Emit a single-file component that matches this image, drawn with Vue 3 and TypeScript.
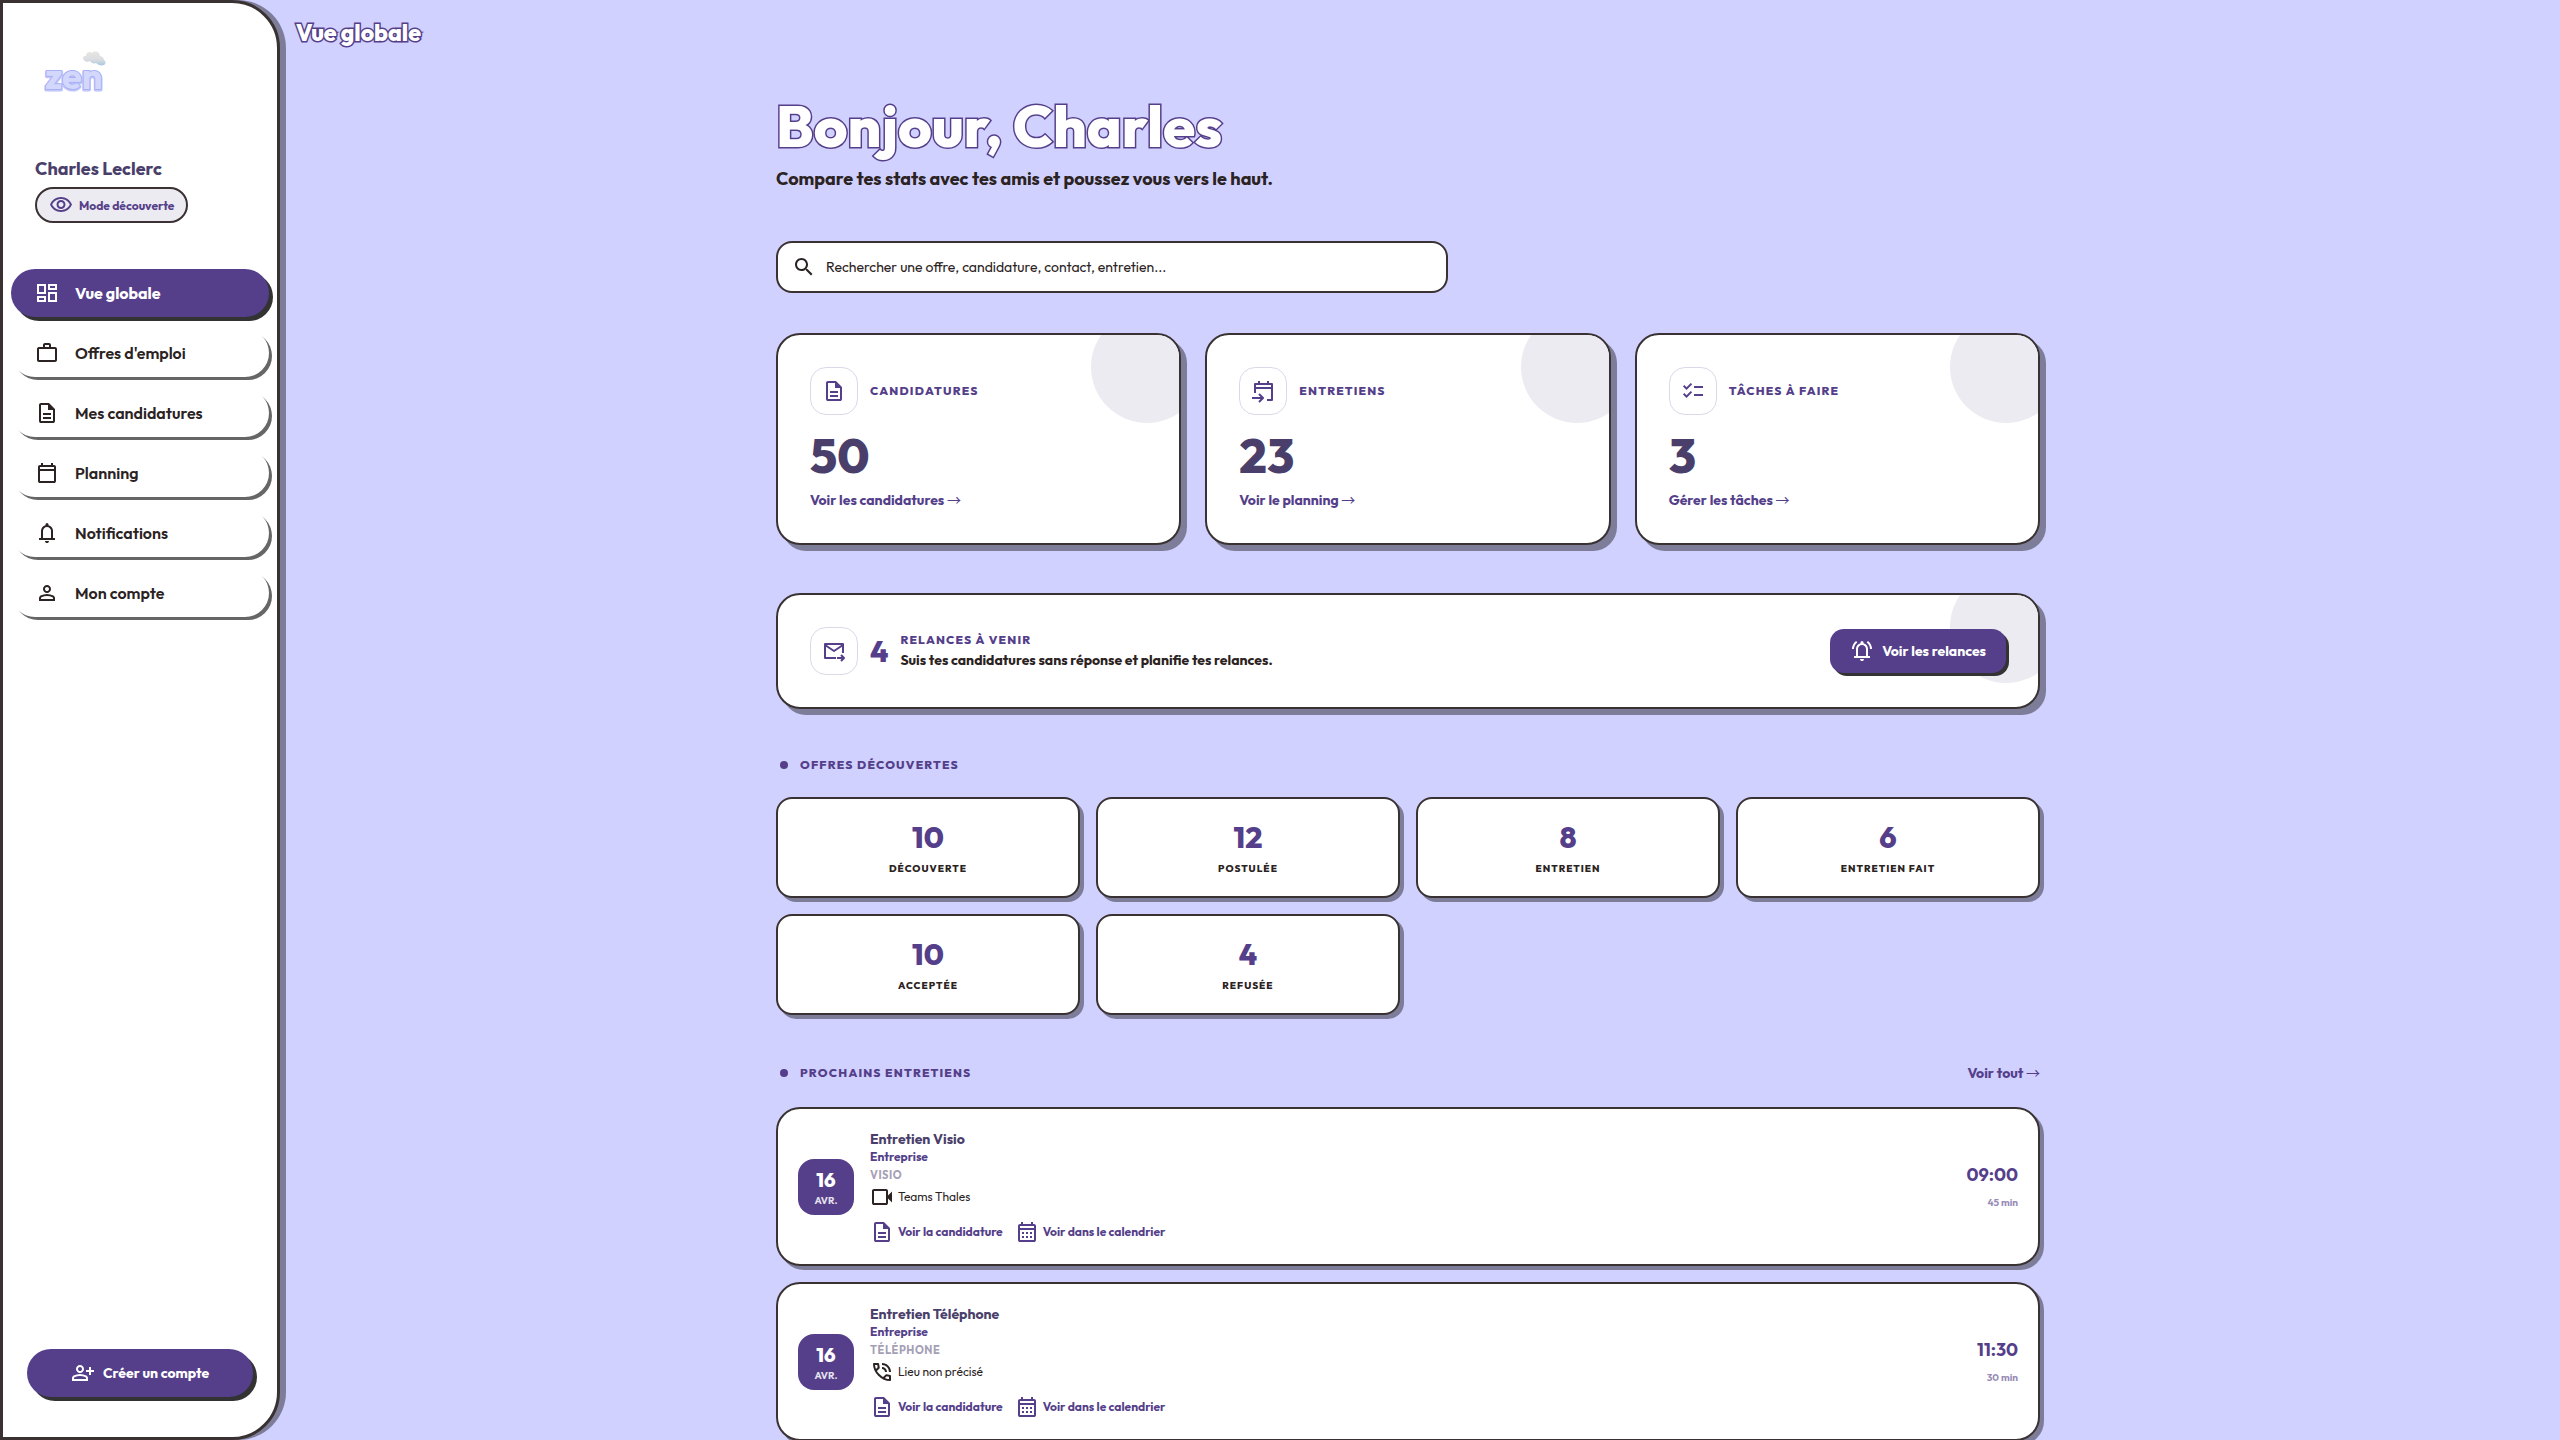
<script setup lang="ts">
import { defineComponent, h } from 'vue'

const person =
  'M12 12q-1.65 0-2.825-1.175T8 8q0-1.65 1.175-2.825T12 4q1.65 0 2.825 1.175T16 8q0 1.65-1.175 2.825T12 12Zm-8 8v-2.8q0-.85.438-1.562T5.6 14.55q1.55-.775 3.15-1.163T12 13q1.65 0 3.25.388t3.15 1.162q.725.375 1.163 1.088T20 17.2V20H4Zm2-2h12v-.8q0-.275-.137-.5t-.363-.35q-1.35-.675-2.725-1.012T12 15q-1.4 0-2.775.338T6.5 16.35q-.225.125-.362.35T6 17.2v.8Zm6-8q.825 0 1.413-.587T14 8q0-.825-.587-1.413T12 6q-.825 0-1.413.588T10 8q0 .825.588 1.413T12 10Z'
const bell =
  'M4 19v-2h2v-7q0-2.075 1.25-3.687T10.5 4.2v-.7q0-.625.438-1.062T12 2q.625 0 1.063.438T13.5 3.5v.7q2 .5 3.25 2.113T18 10v7h2v2H4Zm8 3q-.825 0-1.413-.587T10 20h4q0 .825-.587 1.413T12 22Zm-4-5h8v-7q0-1.65-1.175-2.825T12 6q-1.65 0-2.825 1.175T8 10v7Z'
const calendar =
  'M5 22q-.825 0-1.413-.587T3 20V6q0-.825.588-1.413T5 4h1V2h2v2h8V2h2v2h1q.825 0 1.413.588T21 6v14q0 .825-.587 1.413T19 22H5Zm0-2h14V10H5v10ZM5 8h14V6H5v2Z'

const shapes: Record<string, string> = {
  eye: 'M12 6c3.79 0 7.17 2.13 8.82 5.5C19.17 14.87 15.79 17 12 17s-7.17-2.13-8.82-5.5C4.83 8.13 8.21 6 12 6m0-2C7 4 2.73 7.11 1 11.5 2.73 15.89 7 19 12 19s9.27-3.11 11-7.5C21.27 7.11 17 4 12 4zm0 5c1.38 0 2.5 1.12 2.5 2.5S13.38 14 12 14s-2.5-1.12-2.5-2.5S10.62 9 12 9m0-2c-2.48 0-4.5 2.02-4.5 4.5S9.52 16 12 16s4.5-2.02 4.5-4.5S14.48 7 12 7z',
  dashboard:
    'M2 3h9v10H2Zm2 2v6h5V5Zm9-2h9v6h-9Zm2 2v2h5V5Zm-2 6h9v10h-9Zm2 2v6h5v-6ZM2 15h9v6H2Zm2 2v2h5v-2Z',
  work: 'M14 6V4h-4v2h4zM4 8v11h16V8H4zm16-2c1.11 0 2 .89 2 2v11c0 1.11-.89 2-2 2H4c-1.11 0-2-.89-2-2l.01-11c0-1.11.88-2 1.99-2h4V4c0-1.11.89-2 2-2h4c1.11 0 2 .89 2 2v2h4z',
  doc: 'M8 18h8v-2H8v2Zm0-4h8v-2H8v2Zm-2 8q-.825 0-1.413-.587T4 20V4q0-.825.588-1.413T6 2h8l6 6v12q0 .825-.588 1.413T18 22H6Zm7-13V4H6v16h12V9h-5Z',
  calendar,
  month: calendar + 'M7 12h2v2H7Zm4 0h2v2h-2Zm4 0h2v2h-2ZM7 16h2v2H7Zm4 0h2v2h-2Zm4 0h2v2h-2Z',
  bell,
  ringing:
    bell +
    'M2 10q0-2.5 1.113-4.587T6.1 1.95L7.3 3.55Q5.8 4.65 4.9 6.325T4 10H2Zm18 0q0-2-.9-3.675T16.7 3.55l1.2-1.6Q19.775 3.325 20.888 5.413T22 10h-2Z',
  person,
  search:
    'M15.5 14h-.79l-.28-.27C15.41 12.59 16 11.11 16 9.5 16 5.91 13.09 3 9.5 3S3 5.91 3 9.5 5.91 16 9.5 16c1.61 0 3.09-.59 4.23-1.57l.27.28v.79l5 4.99L20.49 19l-4.99-5zm-6 0C7.01 14 5 11.99 5 9.5S7.01 5 9.5 5 14 7.01 14 9.5 11.99 14 9.5 14z',
  checklist:
    'M5.55 19 2 15.45l1.4-1.4 2.125 2.125 4.25-4.25 1.4 1.425L5.55 19Zm0-8L2 7.45l1.4-1.4 2.125 2.125 4.25-4.25 1.4 1.425L5.55 11ZM13 17v-2h9v2h-9Zm0-8V7h9v2h-9Z',
  video:
    'M4 20q-.825 0-1.413-.587T2 18V6q0-.825.588-1.413T4 4h12q.825 0 1.413.588T18 6v4.5l4-4v11l-4-4V18q0 .825-.587 1.413T16 20H4Zm0-2h12V6H4v12Z',
  phone:
    'M19.95 21q-3.125 0-6.175-1.362t-5.55-3.863q-2.5-2.5-3.862-5.55T3 4.05q0-.45.3-.75t.75-.3H8.1q.35 0 .625.238t.325.562l.65 3.5q.05.4-.025.675T9.4 8.45L6.975 10.9q.5.925 1.187 1.787t1.513 1.663q.775.775 1.625 1.438T13.1 17l2.35-2.35q.225-.225.588-.337t.712-.063l3.45.7q.35.1.575.363T21 15.9v4.05q0 .45-.3.75t-.75.3ZM6.025 9l1.65-1.65L7.25 5H5.025q.125 1.025.35 2.025T6.025 9Zm8.95 8.95q.975.425 1.988.675T19 18.95v-2.2l-2.35-.475-1.675 1.675ZM19 12q0-2.925-2.037-4.962T12 5V3q1.875 0 3.513.713t2.85 1.925q1.212 1.212 1.925 2.85T21 12h-2Zm-4 0q0-1.25-.875-2.125T12 9V7q2.075 0 3.538 1.463T17 12h-2Z',
}

const strokes: Record<string, string> = {
  eventIn: 'M4 14V5h17v16h-5M4 9h17M8 2v3M17 2v3M1 19h11M8 15l4 4-4 4',
  mailForward: 'M14 19H3V5h18v9M3 6l9 6 9-6M15 19h7M19 16l3 3-3 3',
}

const Icon = defineComponent({
  props: { name: { type: String, required: true } },
  setup(props) {
    return () => {
      const attrs = { viewBox: '0 0 24 24', width: 24, height: 24, 'aria-hidden': 'true', style: 'flex:none;display:block' }
      if (props.name === 'personAdd') {
        return h('svg', { ...attrs, fill: 'currentColor' }, [
          h('path', { d: person, transform: 'translate(-3 0)' }),
          h('path', { d: 'M18 14v-3h-3V9h3V6h2v3h3v2h-3v3h-2Z' }),
        ])
      }
      const line = strokes[props.name]
      return line
        ? h('svg', { ...attrs, fill: 'none', stroke: 'currentColor', 'stroke-width': 2, 'stroke-linejoin': 'round' }, [h('path', { d: line })])
        : h('svg', { ...attrs, fill: 'currentColor' }, [h('path', { d: shapes[props.name], 'fill-rule': 'evenodd' })])
    }
  },
})

const nav = [
  { icon: 'dashboard', label: 'Vue globale', active: true },
  { icon: 'work', label: "Offres d'emploi" },
  { icon: 'doc', label: 'Mes candidatures' },
  { icon: 'calendar', label: 'Planning' },
  { icon: 'bell', label: 'Notifications' },
  { icon: 'person', label: 'Mon compte' },
]

const stats = [
  { icon: 'doc', label: 'Candidatures', value: 50, link: 'Voir les candidatures' },
  { icon: 'eventIn', label: 'Entretiens', value: 23, link: 'Voir le planning' },
  { icon: 'checklist', label: 'Tâches à faire', value: 3, link: 'Gérer les tâches' },
]

const offers = [
  { value: 10, label: 'Découverte' },
  { value: 12, label: 'Postulée' },
  { value: 8, label: 'Entretien' },
  { value: 6, label: 'Entretien fait' },
  { value: 10, label: 'Acceptée' },
  { value: 4, label: 'Refusée' },
]

const interviews = [
  { title: 'Entretien Visio', type: 'Visio', icon: 'video', place: 'Teams Thales', time: '09:00', length: '45 min' },
  { title: 'Entretien Téléphone', type: 'Téléphone', icon: 'phone', place: 'Lieu non précisé', time: '11:30', length: '30 min' },
]
</script>

<template>
  <div class="app">
    <aside class="sidebar">
      <svg class="logo" viewBox="0 0 80 80" role="img" aria-label="zen">
        <defs>
          <linearGradient id="cloud" x1="0" y1="0" x2="0" y2="1">
            <stop offset="0" stop-color="#e9e6e2" />
            <stop offset="0.6" stop-color="#d9dcdf" />
            <stop offset="1" stop-color="#a9c8e0" />
          </linearGradient>
        </defs>
        <text x="10" y="54" class="logo-shadow">zen</text>
        <text x="10" y="53" class="logo-text">zen</text>
        <path
          fill="url(#cloud)"
          d="M49 24c-2-2-1-4 2-4 0-4 4-5 6-3 3-3 8-1 8 3 3 0 4 3 4 4 2 1 2 4 0 5-3 1-6 0-8-2-2 1-5 0-6-2-2 1-5 1-6-1Z"
        />
      </svg>

      <div class="profile">
        <p class="name">Charles Leclerc</p>
        <button type="button" class="mode"><Icon name="eye" />Mode découverte</button>
      </div>

      <nav class="nav">
        <a v-for="item in nav" :key="item.label" href="#" :class="['nav-item', { active: item.active }]">
          <Icon :name="item.icon" />{{ item.label }}
        </a>
      </nav>

      <button type="button" class="create"><Icon name="personAdd" />Créer un compte</button>
    </aside>

    <div class="content">
      <header class="topbar">Vue globale</header>

      <main class="page">
        <h1>Bonjour, Charles</h1>
        <p class="subtitle">Compare tes stats avec tes amis et poussez vous vers le haut.</p>

        <label class="search">
          <Icon name="search" />
          <input type="search" aria-label="Rechercher" placeholder="Rechercher une offre, candidature, contact, entretien..." />
        </label>

        <section class="stats">
          <article v-for="s in stats" :key="s.label" class="card stat">
            <div class="stat-head">
              <span class="icon-box"><Icon :name="s.icon" /></span>
              <h2 class="label">{{ s.label }}</h2>
            </div>
            <p class="stat-value">{{ s.value }}</p>
            <a href="#" class="link">{{ s.link }} <span class="arrow">→</span></a>
          </article>
        </section>

        <section class="card relances">
          <span class="icon-box"><Icon name="mailForward" /></span>
          <strong class="count">4</strong>
          <div class="relances-text">
            <h2 class="label">Relances à venir</h2>
            <p>Suis tes candidatures sans réponse et planifie tes relances.</p>
          </div>
          <button type="button" class="relances-btn"><Icon name="ringing" />Voir les relances</button>
        </section>

        <section class="section">
          <div class="section-head"><h2 class="label dotted">Offres découvertes</h2></div>
          <div class="offers">
            <div v-for="o in offers" :key="o.label" class="offer">
              <strong>{{ o.value }}</strong>
              <span>{{ o.label }}</span>
            </div>
          </div>
        </section>

        <section class="section">
          <div class="section-head">
            <h2 class="label dotted">Prochains entretiens</h2>
            <a href="#" class="link">Voir tout <span class="arrow">→</span></a>
          </div>
          <div class="interviews">
            <article v-for="i in interviews" :key="i.title" class="interview">
              <div class="date"><strong>16</strong><span>avr.</span></div>
              <div class="details">
                <h3>{{ i.title }}</h3>
                <p class="company">Entreprise</p>
                <p class="type">{{ i.type }}</p>
                <p class="place"><Icon :name="i.icon" />{{ i.place }}</p>
                <div class="actions">
                  <a href="#"><Icon name="doc" />Voir la candidature</a>
                  <a href="#"><Icon name="month" />Voir dans le calendrier</a>
                </div>
              </div>
              <div class="when">
                <strong>{{ i.time }}</strong>
                <span>{{ i.length }}</span>
              </div>
            </article>
          </div>
        </section>
      </main>
    </div>
  </div>
</template>

<style>
body {
  background: #d0d1ff;
}
</style>

<style scoped>
* {
  box-sizing: border-box;
}
h1, h2, h3, p {
  margin: 0;
}
a {
  color: inherit;
  text-decoration: none;
}
button, input {
  font: inherit;
  color: inherit;
  border: 0;
  padding: 0;
  cursor: pointer;
}
.app {
  display: flex;
  height: 100vh;
  overflow: hidden;
  background: #d0d1ff;
  color: #2b2222;
  font-family: Outfit, Lato, 'Open Sans', sans-serif;
}

/* Sidebar */
.sidebar {
  flex: none;
  display: flex;
  flex-direction: column;
  width: 280px;
  border: 3px solid #3a3232;
  border-radius: 0 48px 48px 0;
  background: #fff;
  box-shadow: 6px 0 0 rgba(0, 0, 0, 0.4);
}
.logo {
  width: 80px;
  height: 80px;
  margin: 33px 0 0 32px;
}
.logo text {
  font-family: Outfit, Lato, sans-serif;
  font-size: 36px;
  font-weight: 700;
  stroke-linejoin: round;
}
.logo-shadow {
  fill: #b6bdf8;
  stroke: #c3c8fa;
  stroke-width: 3px;
}
.logo-text {
  fill: #d3d7fb;
  stroke: #a9b1f5;
  stroke-width: 2px;
  paint-order: stroke fill;
}
.profile {
  margin: 41px 0 0 32px;
}
.name {
  font-size: 18px;
  line-height: 24px;
  font-weight: 700;
  color: #4a3f6b;
}
.mode {
  display: flex;
  align-items: center;
  gap: 6px;
  height: 36px;
  margin-top: 6px;
  padding: 0 12px;
  border: 2px solid #3a3232;
  border-radius: 18px;
  background: #edebf2;
  color: #553f8a;
  font-size: 12px;
  font-weight: 700;
}
.nav {
  display: flex;
  flex-direction: column;
  gap: 12px;
  margin: 46px 8px 0;
}
.nav-item {
  display: flex;
  align-items: center;
  gap: 16px;
  height: 48px;
  padding: 0 24px;
  border-radius: 24px;
  background: #fff;
  box-shadow: 3px 3px 0 #666;
  font-size: 16px;
  font-weight: 600;
}
.nav-item.active {
  background: #553f8a;
  color: #fff;
  box-shadow: 4px 4px 0 #333;
  font-weight: 700;
}
.create {
  display: flex;
  align-items: center;
  justify-content: center;
  gap: 8px;
  height: 48px;
  margin: auto 24px 40px;
  border-radius: 24px;
  background: #553f8a;
  color: #fff;
  box-shadow: 4px 4px 0 #333;
  font-size: 14px;
  font-weight: 700;
}

/* Main column */
.content {
  flex: 1;
  min-width: 0;
  overflow-y: auto;
  scrollbar-width: none;
  padding: 16px 40px 40px 16px;
}
.topbar,
h1 {
  color: #fff;
  font-weight: 800;
  paint-order: stroke fill;
  -webkit-text-stroke: 3px #553f8a;
}
.topbar {
  height: 32px;
  font-size: 23px;
  line-height: 34px;
}
.page {
  max-width: 1264px;
  margin: 46px auto 0;
}
h1 {
  font-size: 58px;
  line-height: 64px;
}
.subtitle {
  margin-top: 9px;
  font-size: 18px;
  line-height: 24px;
  font-weight: 700;
}
.search {
  display: flex;
  align-items: center;
  gap: 10px;
  max-width: 672px;
  height: 52px;
  margin-top: 50px;
  padding: 0 14px;
  border: 2px solid #3a3232;
  border-radius: 16px;
  background: #fff;
}
.search input {
  flex: 1;
  min-width: 0;
  outline: 0;
  background: transparent;
  font-size: 14px;
}
.search input::placeholder {
  color: #2b2222;
  opacity: 1;
}
.card {
  position: relative;
  overflow: hidden;
  padding: 32px;
  border: 2px solid #3a3232;
  border-radius: 24px;
  background: #fff;
  box-shadow: 6px 6px 0 rgba(0, 0, 0, 0.4);
}
.card::before {
  content: '';
  position: absolute;
  top: -24px;
  right: -24px;
  width: 112px;
  height: 112px;
  border-radius: 50%;
  background: #edebf2;
}
.icon-box {
  flex: none;
  display: flex;
  align-items: center;
  justify-content: center;
  width: 48px;
  height: 48px;
  border: 1px solid #dcd8e8;
  border-radius: 16px;
  color: #553f8a;
}
.label {
  font-size: 12px;
  line-height: 16px;
  font-weight: 800;
  letter-spacing: 0.1em;
  text-transform: uppercase;
  color: #553f8a;
}
.link {
  font-size: 14px;
  line-height: 20px;
  font-weight: 700;
  color: #553f8a;
}
.arrow {
  font-family: 'Noto Sans CJK JP', sans-serif;
  font-weight: 400;
  line-height: 1;
}
.stats {
  display: grid;
  grid-template-columns: repeat(3, 1fr);
  gap: 24px;
  margin-top: 40px;
}
.stat {
  display: flex;
  flex-direction: column;
  align-items: flex-start;
  min-height: 212px;
}
.stat-head {
  display: flex;
  align-items: center;
  gap: 12px;
}
.stat-value {
  margin: 16px 0 11px;
  font-size: 48px;
  line-height: 48px;
  font-weight: 800;
  color: #4a3f6b;
}
.relances {
  display: flex;
  align-items: center;
  gap: 12px;
  margin-top: 48px;
}
.count {
  font-size: 30px;
  line-height: 36px;
  font-weight: 800;
  color: #553f8a;
}
.relances-text {
  flex: 1;
  font-size: 14px;
  line-height: 20px;
  font-weight: 700;
}
.relances-text .label {
  margin-bottom: 2px;
}
.relances-btn {
  position: relative;
  display: flex;
  align-items: center;
  gap: 8px;
  height: 44px;
  padding: 0 20px;
  border-radius: 14px;
  background: #553f8a;
  color: #fff;
  box-shadow: 3px 3px 0 #333;
  font-size: 14px;
  font-weight: 700;
}
.section {
  margin-top: 48px;
}
.section-head {
  display: flex;
  align-items: center;
  justify-content: space-between;
  margin-bottom: 24px;
}
.dotted {
  display: flex;
  align-items: center;
  gap: 12px;
  padding-left: 4px;
}
.dotted::before {
  content: '';
  width: 8px;
  height: 8px;
  border-radius: 50%;
  background: #553f8a;
}
.offers {
  display: grid;
  grid-template-columns: repeat(4, 1fr);
  gap: 16px;
}
.offer,
.interview {
  border: 2px solid #3a3232;
  background: #fff;
  box-shadow: 4px 4px 0 rgba(0, 0, 0, 0.4);
}
.offer {
  display: flex;
  flex-direction: column;
  align-items: center;
  gap: 6px;
  padding: 20px 20px 19px;
  border-radius: 16px;
}
.offer strong {
  font-size: 30px;
  line-height: 36px;
  font-weight: 800;
  color: #553f8a;
}
.offer span {
  font-size: 10px;
  line-height: 16px;
  font-weight: 800;
  letter-spacing: 0.1em;
  text-transform: uppercase;
}
.interviews {
  display: flex;
  flex-direction: column;
  gap: 16px;
}
.interview {
  display: flex;
  align-items: center;
  gap: 16px;
  padding: 20px;
  border-radius: 24px;
}
.date {
  flex: none;
  display: flex;
  flex-direction: column;
  align-items: center;
  justify-content: center;
  width: 56px;
  height: 56px;
  border-radius: 16px;
  background: #553f8a;
  color: #fff;
}
.date strong {
  font-size: 20px;
  line-height: 28px;
  font-weight: 800;
}
.date span {
  font-size: 10px;
  line-height: 14px;
  font-weight: 700;
  text-transform: uppercase;
  opacity: 0.85;
}
.details {
  flex: 1;
  font-size: 12px;
  line-height: 16px;
}
.details h3 {
  font-size: 14px;
  line-height: 20px;
  font-weight: 700;
  color: #4a3f6b;
}
.company {
  font-weight: 700;
  color: #553f8a;
}
.type {
  font-size: 11px;
  line-height: 20px;
  font-weight: 700;
  letter-spacing: 0.05em;
  text-transform: uppercase;
  color: #a59fb5;
}
.place,
.actions,
.actions a {
  display: flex;
  align-items: center;
  gap: 4px;
}
.actions {
  gap: 12px;
  margin-top: 11px;
  font-weight: 700;
  color: #553f8a;
}
.when {
  display: flex;
  flex-direction: column;
  align-items: flex-end;
  gap: 8px;
  color: #553f8a;
}
.when strong {
  font-size: 18px;
  line-height: 24px;
  font-weight: 700;
}
.when span {
  font-size: 10px;
  line-height: 16px;
  font-weight: 700;
  opacity: 0.6;
}
</style>
